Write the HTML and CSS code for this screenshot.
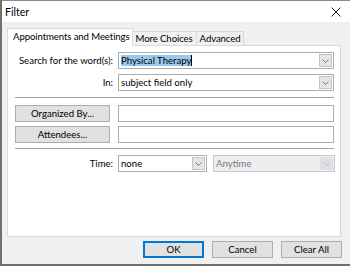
FILE: index.html
```html
<!DOCTYPE html>
<html>
<head>
<meta charset="utf-8">
<link rel="stylesheet" href="styles.css">
</head>
<body>
<div class="window">
  <div class="titlebar">
    <span class="title">Filter</span>
    <svg class="close" width="10" height="10" viewBox="0 0 10 10"><path d="M0.5 0.5L9.5 9.5M9.5 0.5L0.5 9.5" stroke="#222" stroke-width="1"/></svg>
  </div>
  <div class="client">
    <div class="tabs">
      <div class="tab active">Appointments and Meetings</div>
      <div class="tab">More Choices</div>
      <div class="tab">Advanced</div>
    </div>
    <div class="panel">
      <div class="row r1">
        <span class="label">Search for the word(s):</span>
        <div class="combo"><span class="val"><span class="sel">Physical Therapy</span><span class="caret"></span></span><span class="drop"><svg width="7" height="4" viewBox="0 0 7 4"><path d="M0.5 0.5L3.5 3.5L6.5 0.5" fill="none" stroke="#777"/></svg></span></div>
      </div>
      <div class="row r2">
        <span class="label">In:</span>
        <div class="combo"><span class="val">subject field only</span><span class="drop"><svg width="7" height="4" viewBox="0 0 7 4"><path d="M0.5 0.5L3.5 3.5L6.5 0.5" fill="none" stroke="#777"/></svg></span></div>
      </div>
      <div class="sep s1"></div>
      <div class="row r3">
        <div class="btn wide">Organized By...</div>
        <div class="field"></div>
      </div>
      <div class="row r4">
        <div class="btn wide">Attendees...</div>
        <div class="field"></div>
      </div>
      <div class="sep s2"></div>
      <div class="row r5">
        <span class="label">Time:</span>
        <div class="combo small"><span class="val">none</span><span class="drop"><svg width="7" height="4" viewBox="0 0 7 4"><path d="M0.5 0.5L3.5 3.5L6.5 0.5" fill="none" stroke="#777"/></svg></span></div>
        <div class="combo disabled"><span class="val">Anytime</span><span class="drop"><svg width="7" height="4" viewBox="0 0 7 4"><path d="M0.5 0.5L3.5 3.5L6.5 0.5" fill="none" stroke="#bbb"/></svg></span></div>
      </div>
    </div>
    <div class="footer">
      <div class="btn action default">OK</div>
      <div class="btn action">Cancel</div>
      <div class="btn action">Clear All</div>
    </div>
  </div>
</div>
</body>
</html>
```
FILE: styles.css
```css
* { box-sizing: border-box; }
html, body { margin: 0; padding: 0; }
body { width: 350px; height: 266px; overflow: hidden; background: #fff; font-family: Lato, "Noto Sans", sans-serif; font-size: 9.6px; color: #000; }
.window { width: 350px; height: 266px; border-left: 2px solid #707070; border-top: 1px solid #8a8a8a; border-bottom: 2px solid #707070; display: flex; flex-direction: column; background: #f0f0f0; white-space: nowrap; }
.titlebar { height: 21px; background: #fff; display: flex; align-items: center; justify-content: space-between; padding: 0 9px 0 3px; }
.title { font-size: 10.5px; }
.client { flex: 1; padding: 6px 9px 0 5px; display: flex; flex-direction: column; }
.tabs { display: flex; align-items: flex-end; height: 17px; position: relative; z-index: 1; letter-spacing: -0.1px; }
.tab { height: 14px; border: 1px solid #d9d9d9; border-bottom: none; background: #f0f0f0; padding: 0 3px 0 3px; line-height: 13px; margin-left: -1px; }
.tab.active { height: 18px; background: #fff; padding: 0 2px 0 5px; line-height: 15px; margin-left: 0; margin-bottom: -1px; }
.panel { height: 192px; background: #fff; border: 1px solid #d9d9d9; padding: 6px 6px 0 7px; display: flex; flex-direction: column; }
.row { display: flex; align-items: center; height: 17px; }
.r2 { margin-top: 5px; }
.r3 { margin-top: 6px; }
.r4 { margin-top: 4px; }
.r5 { margin-top: 5px; }
.label { flex: 0 0 98px; text-align: right; }
.combo { flex: 1 1 0; min-width: 0; height: 17px; border: 1px solid #adadad; display: flex; align-items: center; padding: 1px; margin-left: 5px; }
.combo .val { flex: 1; padding-left: 1px; display: flex; align-items: center; white-space: nowrap; }
.sel { background: #99c9ef; }
.caret { width: 1px; height: 11px; background: #000; }
.drop { width: 13px; height: 13px; background: #e5e5e5; border: 1px solid #c4c4c4; display: flex; align-items: center; justify-content: center; }
.combo.small { flex: 0 0 89px; }
.combo.disabled { flex: 0 0 122px; margin-left: 6px; margin-right: -2px; background: #eeeeee; border-color: #b5cbe6; color: #7a7a7a; }
.combo.disabled .drop { background: #e0e0e0; border-color: #e0e0e0; }
.sep { height: 2px; border-top: 1px solid #a0a0a0; border-bottom: 1px solid #fff; margin-left: 0; }
.s1 { margin-top: 6px; }
.s2 { margin-top: 5px; }
.btn { height: 17px; border: 1px solid #adadad; background: #e1e1e1; display: flex; align-items: center; justify-content: center; }
.wide { flex: 0 0 95px; }
.field { flex: 1; height: 17px; border: 1px solid #adadad; margin-left: 8px; }
.footer { display: flex; justify-content: flex-end; gap: 8px; margin-top: 4px; margin-right: -1px; }
.action { width: 61px; }
.default { border: 2px solid #0078d7; }
```
